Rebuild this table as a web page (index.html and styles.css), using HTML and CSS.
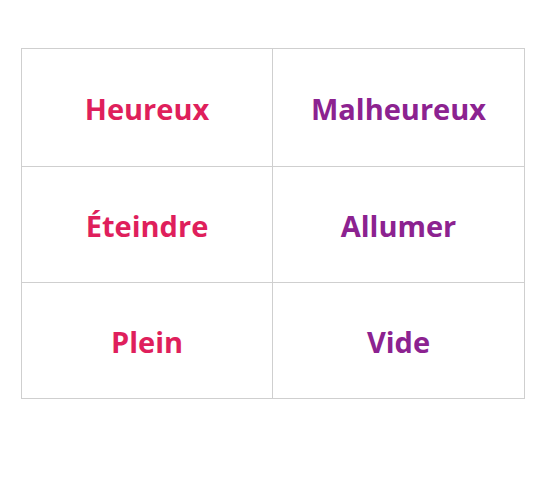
FILE: index.html
```html
<!DOCTYPE html>
<html lang="fr">
<head>
<meta charset="utf-8">
<title>Contraires</title>
<link rel="stylesheet" href="styles.css">
</head>
<body>
<div class="board">
  <div class="card pink">Heureux</div>
  <div class="card purple">Malheureux</div>
  <div class="card pink">Éteindre</div>
  <div class="card purple">Allumer</div>
  <div class="card pink">Plein</div>
  <div class="card purple">Vide</div>
</div>
</body>
</html>
```
FILE: styles.css
```css
html, body {
  margin: 0;
  padding: 0;
  background: #ffffff;
}
body {
  width: 540px;
  height: 480px;
  overflow: hidden;
  font-family: "Open Sans", "Noto Sans", sans-serif;
}
.board {
  margin: 48px 0 0 21px;
  display: grid;
  grid-template-columns: 251px 252px;
  grid-template-rows: 118px 116px 116px;
  width: max-content;
  border-top: 1px solid #cfcfcf;
  border-left: 1px solid #cfcfcf;
}
.card {
  display: flex;
  align-items: center;
  justify-content: center;
  border-right: 1px solid #cfcfcf;
  border-bottom: 1px solid #cfcfcf;
  font-size: 29px;
  font-weight: 700;
  padding-top: 2px;
}
.pink { color: #df1f5c; }
.purple { color: #8c2290; }
```
